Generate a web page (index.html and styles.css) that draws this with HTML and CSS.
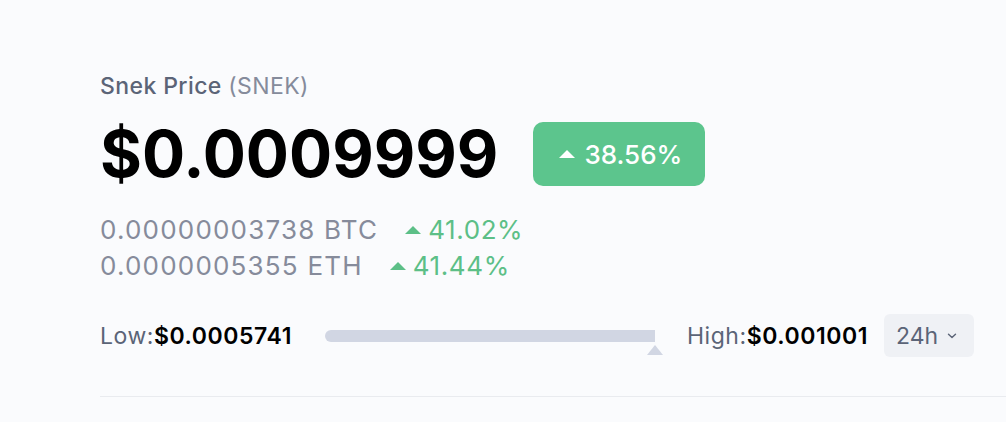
FILE: index.html
```html
<!DOCTYPE html>
<html lang="en">
<head>
  <meta charset="UTF-8">
  <meta name="viewport" content="width=device-width, initial-scale=1.0">
  <title>Snek Price</title>
  <link rel="stylesheet" href="styles.css">
</head>
<body>
  <div class="price-card">
    <h1 class="title">Snek Price <span class="symbol">(SNEK)</span></h1>

    <div class="price-row">
      <div class="price">$0.0009999</div>
      <div class="badge"><span class="up"></span>38.56%</div>
    </div>

    <div class="pairs">
      <div class="pair">
        <span class="pair-value">0.00000003738 BTC</span>
        <span class="change"><span class="up"></span>41.02%</span>
      </div>
      <div class="pair">
        <span class="pair-value">0.0000005355 ETH</span>
        <span class="change"><span class="up"></span>41.44%</span>
      </div>
    </div>

    <div class="range">
      <div class="range-label">Low:<b>$0.0005741</b></div>
      <div class="range-bar">
        <div class="bar"></div>
        <div class="marker"></div>
      </div>
      <div class="range-label">High:<b>$0.001001</b></div>
      <button class="period">24h
        <svg width="10" height="6" viewBox="0 0 10 6"><path d="M1.5 1.2 L5 4.6 L8.5 1.2" fill="none" stroke="#5b6477" stroke-width="1.4" stroke-linecap="round" stroke-linejoin="round"/></svg>
      </button>
    </div>
  </div>
</body>
</html>
```

FILE: styles.css
```css
body {
  margin: 0;
  background-color: #fafbfd;
  font-family: Inter, "Noto Sans", sans-serif;
  color: #000;
}

.price-card {
  padding: 70px 0 0 100px;
}

.title {
  margin: 0;
  font-size: 23px;
  font-weight: 500;
  letter-spacing: 0.4px;
  line-height: 32px;
  color: #5b6477;
}

.title .symbol {
  font-weight: 400;
  color: #858b9b;
}

.price-row {
  display: flex;
  align-items: center;
  gap: 35px;
  margin-top: 12px;
}

.price {
  font-size: 64px;
  font-weight: 700;
  line-height: 80px;
}

.badge {
  display: flex;
  align-items: center;
  gap: 9px;
  height: 64px;
  padding: 0 23px 0 26px;
  border-radius: 10px;
  background-color: #5cc58d;
  color: #fff;
  font-size: 26px;
  font-weight: 500;
}

.up {
  display: inline-block;
  width: 0;
  height: 0;
  border-left: 8px solid transparent;
  border-right: 8px solid transparent;
  border-bottom: 8px solid currentColor;
}

.pairs {
  margin-top: 18px;
}

.pair {
  display: flex;
  align-items: center;
  gap: 27px;
  font-size: 26px;
  letter-spacing: 1.2px;
  line-height: 36px;
  color: #868b9b;
}

.change {
  display: flex;
  align-items: center;
  gap: 7px;
  letter-spacing: 0.6px;
  color: #5cbf87;
}

.range {
  display: flex;
  align-items: center;
  margin-top: 30px;
  padding-bottom: 39px;
  border-bottom: 1px solid #e9ebef;
}

.range-label {
  font-size: 23px;
  letter-spacing: 0.55px;
  color: #5b6477;
}

.range-label b {
  font-weight: 600;
  color: #000;
}

.range-bar {
  position: relative;
  width: 330px;
  height: 12px;
  margin: 0 32px 0 33px;
}

.bar {
  height: 12px;
  border-radius: 6px 0 0 6px;
  background-color: #d1d6e3;
}

.marker {
  position: absolute;
  right: -8px;
  top: 15px;
  width: 0;
  height: 0;
  border-left: 8px solid transparent;
  border-right: 8px solid transparent;
  border-bottom: 10px solid #d1d6e3;
}

.period {
  display: flex;
  align-items: center;
  gap: 9px;
  height: 43px;
  margin-left: 16px;
  padding: 0 17px 0 12px;
  border: none;
  border-radius: 6px;
  background-color: #eff1f5;
  font-family: inherit;
  font-size: 23px;
  color: #5b6477;
}
```
